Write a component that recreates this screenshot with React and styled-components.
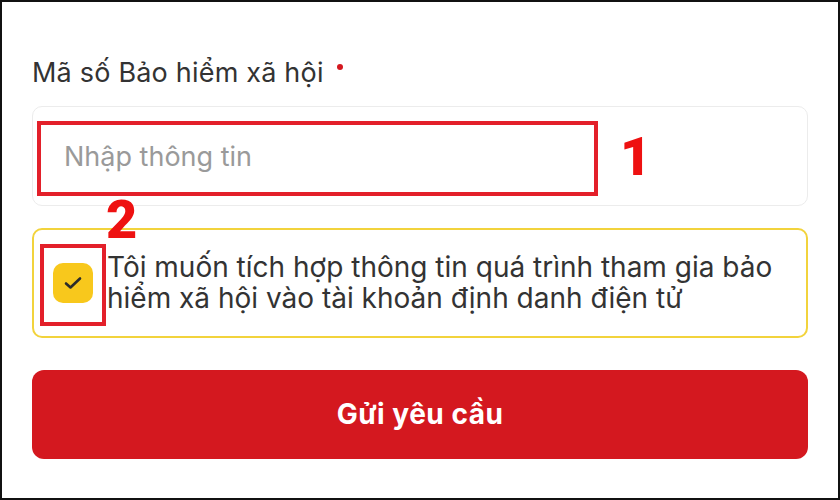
import React from 'react'
import styled, { createGlobalStyle } from 'styled-components'

const GlobalStyle = createGlobalStyle`
  html, body {
    margin: 0;
    padding: 0;
    background: #fff;
  }
  * { box-sizing: border-box; }
`

const StFrame = styled.div`
  width: 840px;
  height: 500px;
  border: 2px solid #111;
  padding: 0 30px;
  display: flex;
  flex-direction: column;
  font-family: Inter, 'Noto Sans', sans-serif;
  color: #333;
  background: #fff;
`

const StLabel = styled.div`
  margin-top: 54px;
  height: 50px;
  font-size: 27px;
  line-height: 34px;
  display: flex;
  align-items: flex-start;
  gap: 13px;
  letter-spacing: 0.2px;
`

const StDot = styled.span`
  width: 6px;
  height: 6px;
  margin-top: 8px;
  border-radius: 50%;
  background: #d4181f;
`

const StInputCard = styled.div`
  position: relative;
  height: 100px;
  border: 1px solid #ececec;
  border-radius: 10px;
  display: flex;
  align-items: center;
  padding-left: 31px;
  font-size: 27px;
  color: #9a9a9a;
`

const StMark = styled.div`
  position: absolute;
  left: ${props => props.left}px;
  top: ${props => props.top}px;
  width: ${props => props.w}px;
  height: ${props => props.h}px;
  border: 4px solid #e3202a;
  pointer-events: none;
`

const StNumber = styled.div`
  position: absolute;
  left: ${props => props.left}px;
  top: ${props => props.top}px;
  font-family: Roboto, 'Liberation Sans', sans-serif;
  font-weight: 900;
  font-size: 54px;
  line-height: 1;
  color: #ee1111;
`

const StConsent = styled.div`
  position: relative;
  margin-top: 22px;
  height: 110px;
  border: 2px solid #f2d33c;
  border-radius: 10px;
  display: flex;
  align-items: center;
  padding-left: 19px;
  gap: 14px;
`

const StCheck = styled.div`
  flex: none;
  width: 40px;
  height: 40px;
  border-radius: 10px;
  background: #f8c81c;
  display: flex;
  align-items: center;
  justify-content: center;
`

const StConsentText = styled.div`
  font-size: 28px;
  line-height: 31px;
  color: #333;
  white-space: nowrap;
`

const StButton = styled.button`
  margin-top: 32px;
  height: 89px;
  border: none;
  border-radius: 12px;
  background: #d4181f;
  color: #fff;
  font-family: Inter, 'Liberation Sans', sans-serif;
  font-weight: 700;
  font-size: 28px;
  letter-spacing: 0.5px;
  display: flex;
  align-items: center;
  justify-content: center;
  padding-bottom: 2px;
`

export default function App() {
  return (
    <>
      <GlobalStyle />
      <StFrame>
        <StLabel>
          Mã số Bảo hiểm xã hội
          <StDot />
        </StLabel>
        <StInputCard>
          Nhập thông tin
          <StMark left={4} top={14} w={561} h={75} />
          <StNumber left={587} top={23}>1</StNumber>
        </StInputCard>
        <StConsent>
          <StCheck>
            <svg width="18" height="14" viewBox="0 0 18 14">
              <path d="M2 7.5 L6.5 11.5 L16 2.5" fill="none" stroke="#2b2b2b" strokeWidth="2.6" strokeLinecap="round" strokeLinejoin="round" />
            </svg>
          </StCheck>
          <StConsentText>
            Tôi muốn tích hợp thông tin quá trình tham gia bảo<br />
            hiểm xã hội vào tài khoản định danh điện tử
          </StConsentText>
          <StMark left={6} top={14} w={66} h={82} />
          <StNumber left={72} top={-37}>2</StNumber>
        </StConsent>
        <StButton>Gửi yêu cầu</StButton>
      </StFrame>
    </>
  )
}
